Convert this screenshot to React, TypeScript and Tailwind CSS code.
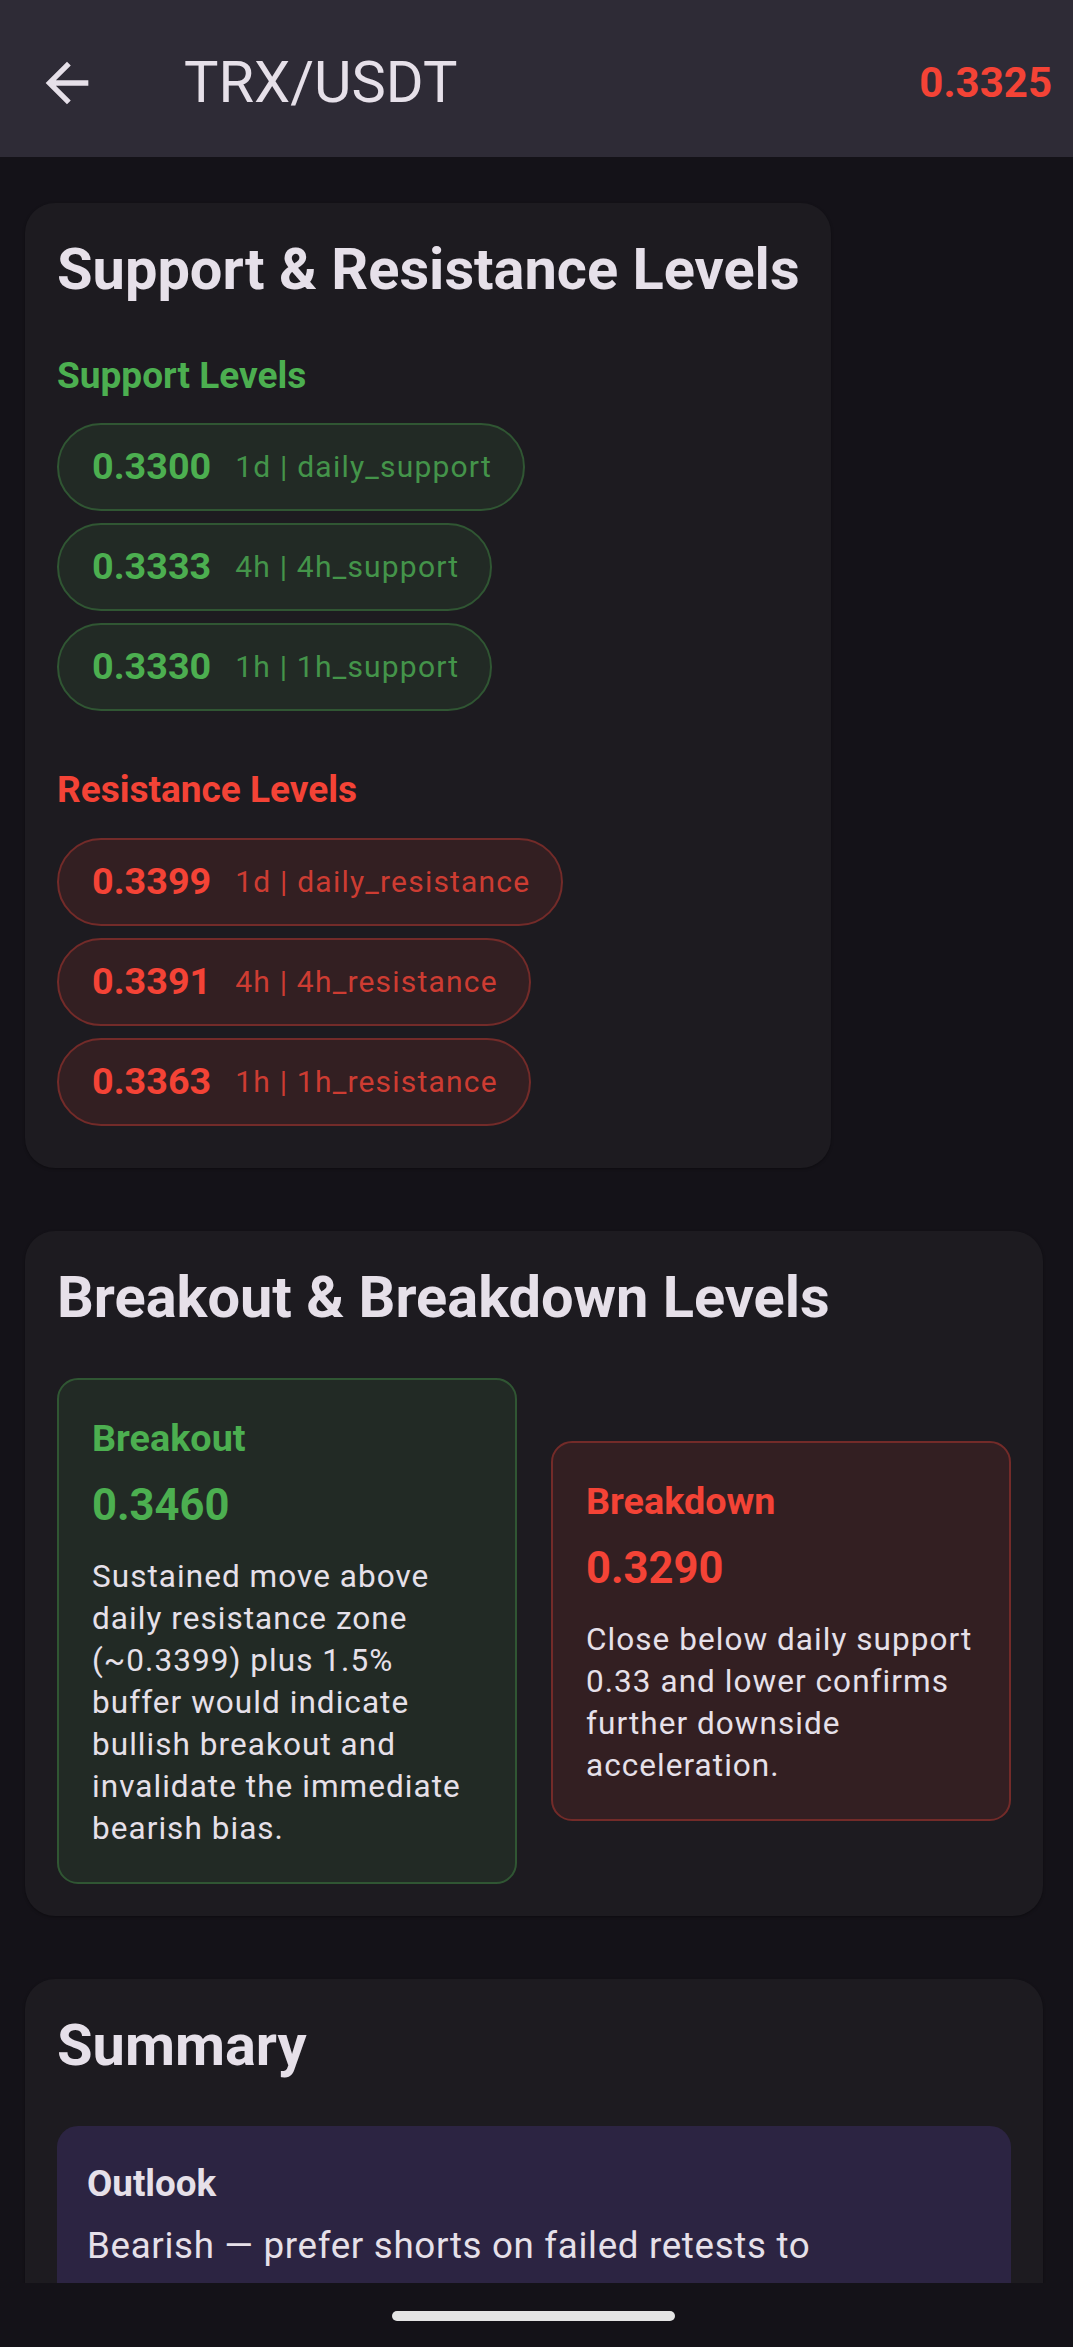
import clsx from "clsx";

type Level = { price: string; tf: string; tag: string };
type Tone = "up" | "down";

const supportLevels: Level[] = [
  { price: "0.3300", tf: "1d", tag: "daily_support" },
  { price: "0.3333", tf: "4h", tag: "4h_support" },
  { price: "0.3330", tf: "1h", tag: "1h_support" },
];

const resistanceLevels: Level[] = [
  { price: "0.3399", tf: "1d", tag: "daily_resistance" },
  { price: "0.3391", tf: "4h", tag: "4h_resistance" },
  { price: "0.3363", tf: "1h", tag: "1h_resistance" },
];

function BackArrow() {
  return (
    <svg viewBox="0 0 24 24" className="h-[64px] w-[64px] fill-[#e6e0e9]">
      <path d="M20 11H7.83l5.59-5.59L12 4l-8 8 8 8 1.41-1.41L7.83 13H20v-2z" />
    </svg>
  );
}

function LevelChip({ level, tone }: { level: Level; tone: Tone }) {
  const up = tone === "up";
  return (
    <div
      className={clsx(
        "flex h-[88px] items-center gap-[24px] rounded-full border-2 pl-[33px] pr-[31px] leading-none",
        up ? "border-[#305633] bg-[#222a25]" : "border-[#732b29] bg-[#331f22]"
      )}
    >
      <span className={clsx("text-[37.75px] font-bold", up ? "text-[#4caf50]" : "text-[#f44336]")}>
        {level.price}
      </span>
      <span className={clsx("text-[30px] tracking-[1.2px]", up ? "text-[#44944a]" : "text-[#cd3c32]")}>
        {level.tf} | {level.tag}
      </span>
    </div>
  );
}

function LevelGroup({ title, levels, tone, className }: { title: string; levels: Level[]; tone: Tone; className?: string }) {
  return (
    <div className={className}>
      <p
        className={clsx(
          "text-[37px] font-bold leading-[52.5px]",
          tone === "up" ? "text-[#4caf50]" : "text-[#f44336]"
        )}
      >
        {title}
      </p>
      <div className="mt-[21px] flex flex-col items-start gap-[12px]">
        {levels.map((l) => (
          <LevelChip key={l.price} level={l} tone={tone} />
        ))}
      </div>
    </div>
  );
}

function TriggerBox({ label, price, text, tone }: { label: string; price: string; text: string; tone: Tone }) {
  const up = tone === "up";
  return (
    <div
      className={clsx(
        "flex-1 rounded-[21px] border-2 pl-[33px] pr-[28px] pt-[32px] pb-[32px]",
        up ? "border-[#305633] bg-[#222a25]" : "border-[#732b29] bg-[#331f22]"
      )}
    >
      <p className={clsx("text-[37.75px] font-bold leading-[52.5px]", up ? "text-[#4caf50]" : "text-[#f44336]")}>
        {label}
      </p>
      <p className={clsx("mt-[9px] text-[43.5px] font-bold leading-[63px]", up ? "text-[#4caf50]" : "text-[#f44336]")}>
        {price}
      </p>
      <p className="mt-[19px] text-[31.5px] leading-[42px] tracking-[1.05px] text-[#e6e0e9]">{text}</p>
    </div>
  );
}

function Card({ title, className, children }: { title: string; className?: string; children: React.ReactNode }) {
  return (
    <section className={clsx("rounded-[30px] bg-[#1d1b20] px-[32px] pt-[29px] shadow-[0_1px_3px_rgba(0,0,0,0.35)]", className)}>
      <h2 className="whitespace-nowrap text-[57.75px] font-bold leading-[74px] text-[#e6e0e9]">{title}</h2>
      {children}
    </section>
  );
}

export default function App() {
  return (
    <div className="flex h-[2347px] w-[1073px] flex-col overflow-hidden bg-[#141218] font-[family-name:Roboto,'Noto_Sans',sans-serif] text-[#e6e0e9]">
      <header className="flex h-[157px] shrink-0 items-center bg-[#2e2b36] pt-[8px]">
        <div className="ml-[35px] flex">
          <BackArrow />
        </div>
        <h1 className="ml-[85px] text-[57.75px] leading-none text-[#e6e0e9]">TRX/USDT</h1>
        <span className="ml-auto mr-[21px] text-[42px] font-bold leading-none text-[#f44336]">0.3325</span>
      </header>

      <main className="h-[2126px] shrink-0 overflow-hidden pl-[25px] pr-[30px] pt-[46px]">
        <Card title="Support & Resistance Levels" className="w-[806px] pb-[42px]">
          <LevelGroup title="Support Levels" levels={supportLevels} tone="up" className="mt-[43.5px]" />
          <LevelGroup title="Resistance Levels" levels={resistanceLevels} tone="down" className="mt-[53px]" />
        </Card>

        <Card title="Breakout & Breakdown Levels" className="mt-[63.5px] pb-[32px]">
          <div className="mt-[44px] flex items-center gap-[34px]">
            <TriggerBox
              tone="up"
              label="Breakout"
              price="0.3460"
              text="Sustained move above daily resistance zone (~0.3399) plus 1.5% buffer would indicate bullish breakout and invalidate the immediate bearish bias."
            />
            <TriggerBox
              tone="down"
              label="Breakdown"
              price="0.3290"
              text="Close below daily support 0.33 and lower confirms further downside acceleration."
            />
          </div>
        </Card>

        <Card title="Summary" className="mt-[63px] pb-[40px]">
          <div className="mt-[44px] rounded-[21px] bg-[#2c2442] px-[30px] pt-[32px] pb-[32px]">
            <p className="text-[36.75px] font-bold leading-[52.5px] text-[#e6e0e9]">Outlook</p>
            <p className="mt-[10px] text-[36.75px] leading-[52.5px] tracking-[0.66px] text-[#e6e0e9]">
              Bearish — prefer shorts on failed retests to resistance while price holds below the daily 0.3399 zone.
            </p>
          </div>
        </Card>
      </main>

      <footer className="h-[64px] shrink-0 pt-[28px]">
        <div className="ml-[392px] h-[10px] w-[283px] rounded-full bg-[#e4e4e4]" />
      </footer>
    </div>
  );
}
